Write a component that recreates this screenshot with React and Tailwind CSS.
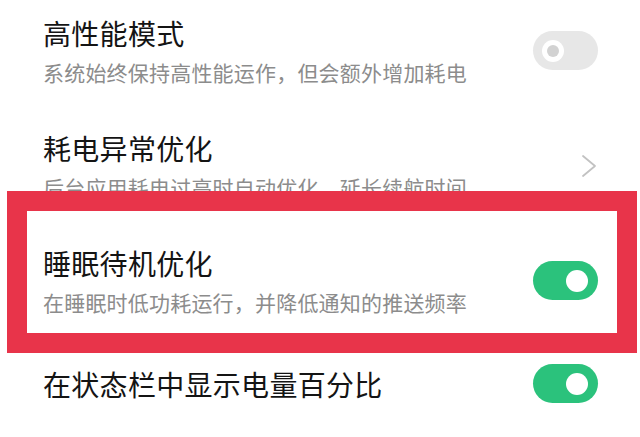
import React from 'react';

const rows = [
  { title: '高性能模式', desc: '系统始终保持高性能运作，但会额外增加耗电', control: 'off' },
  { title: '耗电异常优化', desc: '后台应用耗电过高时自动优化，延长续航时间', control: 'arrow' },
  { title: '睡眠待机优化', desc: '在睡眠时低功耗运行，并降低通知的推送频率', control: 'on' },
  { title: '在状态栏中显示电量百分比', control: 'on' },
];

const Toggle = ({ on }) =>
  on ? (
    <div className="w-[65px] h-[39px] rounded-full bg-[#2bc27c] flex items-center justify-end pr-[10px]">
      <div className="w-[22px] h-[22px] rounded-full bg-white" />
    </div>
  ) : (
    <div className="w-[65px] h-[39px] rounded-full bg-[#e7e7e7] flex items-center pl-[9px]">
      <div className="w-[22px] h-[22px] rounded-full bg-white flex items-center justify-center">
        <div className="w-[12px] h-[12px] rounded-full bg-[#d2d2d2]" />
      </div>
    </div>
  );

const Chevron = () => (
  <div className="w-[65px] flex justify-end pr-[1px]">
    <svg width="16" height="24" viewBox="0 0 16 24" fill="none">
      <polyline points="2,2 14,12 2,22" stroke="#c2c2c2" strokeWidth="1.8" strokeLinecap="round" strokeLinejoin="round" />
    </svg>
  </div>
);

export default function App() {
  return (
    <div
      className="relative w-[640px] h-[437px] bg-white overflow-hidden"
      style={{ fontFamily: '"Noto Sans CJK SC", "Noto Sans", sans-serif' }}
    >
      <div className="flex flex-col pt-[15px] pl-[43px] pr-[42px] gap-[44px]">
        {rows.map((row, i) => (
          <div key={i} className={`flex items-center justify-between ${i === 3 ? 'mt-[4px]' : ''}`}>
            <div className="flex flex-col">
              <div className="text-[28px] leading-[36px] tracking-[0.3px] text-[#141414]">{row.title}</div>
              {row.desc && (
                <div className="mt-[7px] text-[21px] leading-[28px] tracking-[0.2px] text-[#8c8c8c]">{row.desc}</div>
              )}
            </div>
            {row.control === 'arrow' ? <Chevron /> : <Toggle on={row.control === 'on'} />}
          </div>
        ))}
      </div>

      {/* highlight annotation */}
      <div className="absolute left-[7px] top-[191px] w-[630px] h-[162px] border-[20px] border-[#e8344a]" />
    </div>
  );
}
